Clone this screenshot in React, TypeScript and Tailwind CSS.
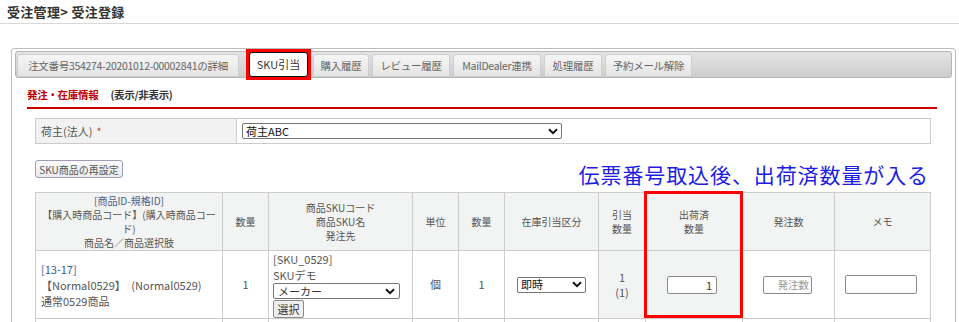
import React from "react";

const font = { fontFamily: '"Noto Sans CJK JP", "Noto Sans", sans-serif' };

function Tab({ label, w }: { label: string; w: string }) {
  return (
    <div
      className={`${w} h-[23px] flex items-center justify-center rounded-t-[3px] border border-[#cfcfcf] bg-gradient-to-b from-[#f6f6f6] to-[#e4e4e4] text-[10.5px] tracking-[-0.3px] text-[#666] mr-[3px] whitespace-nowrap`}
    >
      {label}
    </div>
  );
}

function Chevron() {
  return (
    <svg width="10" height="7" viewBox="0 0 10 7" className="shrink-0">
      <path d="M1 1.2 L5 5.2 L9 1.2" fill="none" stroke="#111" strokeWidth="2" />
    </svg>
  );
}

export default function App() {
  const th = "p-0 border border-[#cccccc] bg-[#f2f3f3] text-[10px] leading-[14px] text-[#555] font-normal text-center align-middle";
  const td = "p-0 border border-[#cccccc] text-[11px] text-[#555] align-middle";
  return (
    <div className="w-[959px] h-[322px] overflow-hidden bg-white relative" style={font}>
      <div className="h-[24px] border-b border-[#d8d8d8] pl-[7px] flex items-center">
        <span className="text-[13px] font-bold text-[#333] tracking-[0.3px]">受注管理&gt; 受注登録</span>
      </div>
      <div className="pt-[24px] pl-[11px] pr-[2px] flex">
        <div className="w-[945px] h-[300px] border border-[#bdbdbd] rounded-t-[3px] pt-[2px] px-[3px] mr-[1px]">
          {/* tab bar */}
          <div className="h-[27px] rounded-[3px] border border-[#b5b5b5] bg-gradient-to-b from-[#e4e4e4] to-[#cdcdcd] flex items-end pl-[1px]">
            <Tab label="注文番号354274-20201012-00002841の詳細" w="w-[222px]" />
            <div className="w-[65px] h-[31px] -mb-[3px] mr-[2px] ml-[4px] border-[3px] border-[#ff0000] bg-[#ff0000]">
              <div className="w-full h-full bg-white border-[1.5px] border-[#111] rounded-[3px] flex items-center justify-center text-[11px] text-[#333]">
                SKU引当
              </div>
            </div>
            <Tab label="購入履歴" w="w-[56px]" />
            <Tab label="レビュー履歴" w="w-[78px]" />
            <Tab label="MailDealer連携" w="w-[88px]" />
            <Tab label="処理履歴" w="w-[58px]" />
            <Tab label="予約メール解除" w="w-[87px]" />
          </div>
          <div className="px-[12px]">
            <div className="h-[29px] flex items-center text-[10.5px] font-bold pt-[4px] tracking-[-0.3px]">
              <span className="text-[#c00000]">発注・在庫情報</span>
              <span className="text-[#333] ml-[12px]">(表示/非表示)</span>
            </div>
            <div className="h-[2px] bg-[#cc0000] mr-[3px]"></div>
            <div className="pl-[8px] pr-[9px]">
              <div className="mt-[9px] h-[26px] border border-[#cccccc] flex">
                <div className="w-[201px] bg-[#f2f2f2] border-r border-[#cccccc] flex items-center pl-[5px] text-[11px] text-[#555]">
                  荷主(法人) <span className="text-[#e04040] ml-[4px]">*</span>
                </div>
                <div className="flex items-center pl-[5px]">
                  <div className="w-[320px] h-[16px] border border-[#767676] rounded-[2px] flex items-center justify-between px-[3px] text-[11px] text-[#111]">
                    <span>荷主ABC</span>
                    <Chevron />
                  </div>
                </div>
              </div>
              <div className="flex items-end justify-between mt-[16px] h-[29px]">
                <div className="mb-[11px] w-[88px] h-[18px] rounded-[3px] border border-[#9d9db8] bg-gradient-to-b from-[#fafafa] to-[#ebebeb] flex items-center justify-center text-[10px] text-[#555]">
                  SKU商品の再設定
                </div>
                <div className="text-[21px] leading-[24px] text-[#1c1ce6] mr-[2px] mb-[3px] tracking-[0.9px]">
                  伝票番号取込後、出荷済数量が入る
                </div>
              </div>
              <div className="relative mt-[3px]">
                <table className="table-fixed border-collapse w-[895px]">
                  <colgroup>
                    <col className="w-[187px]" />
                    <col className="w-[46px]" />
                    <col className="w-[144px]" />
                    <col className="w-[46px]" />
                    <col className="w-[46px]" />
                    <col className="w-[94px]" />
                    <col className="w-[47px]" />
                    <col className="w-[97px]" />
                    <col className="w-[92px]" />
                    <col className="w-[96px]" />
                  </colgroup>
                  <thead>
                    <tr className="h-[58px]">
                      <th className={th}>
                        <div className="text-[#4a5f8a]">[商品ID-規格ID]</div>
                        <div className="whitespace-nowrap">【購入時商品コード】(購入時商品コー</div>
                        <div>ド)</div>
                        <div>商品名／商品選択肢</div>
                      </th>
                      <th className={th}>数量</th>
                      <th className={th}>
                        <div>商品SKUコード</div>
                        <div>商品SKU名</div>
                        <div>発注先</div>
                      </th>
                      <th className={th}>単位</th>
                      <th className={th}>数量</th>
                      <th className={th}>在庫引当区分</th>
                      <th className={th}>
                        <div>引当</div>
                        <div>数量</div>
                      </th>
                      <th className={th}>
                        <div>出荷済</div>
                        <div>数量</div>
                      </th>
                      <th className={th}>発注数</th>
                      <th className={th}>メモ</th>
                    </tr>
                  </thead>
                  <tbody>
                    <tr className="h-[67px]">
                      <td className={`${td} pl-[5px] leading-[16px]`}>
                        <div className="text-[#3a5a9a]">[13-17]</div>
                        <div className="whitespace-nowrap">【Normal0529】　(Normal0529)</div>
                        <div>通常0529商品</div>
                      </td>
                      <td className={`${td} text-center`}>1</td>
                      <td className={`${td} pl-[4px] leading-[16px]`}>
                        <div>[SKU_0529]</div>
                        <div>SKUデモ</div>
                        <div className="w-[127px] h-[16px] border border-[#767676] rounded-[2px] flex items-center justify-between px-[4px] text-[#333]">
                          <span>メーカー</span>
                          <Chevron />
                        </div>
                        <div className="w-[31px] h-[18px] mt-[1px] border border-[#8a8a8a] rounded-[2px] bg-[#efefef] flex items-center justify-center text-[11px] text-[#333]">
                          選択
                        </div>
                      </td>
                      <td className={`${td} text-center`}>個</td>
                      <td className={`${td} text-center`}>1</td>
                      <td className={`${td} text-center`}>
                        <div className="ml-[12px] w-[69px] h-[16px] border border-[#767676] rounded-[2px] flex items-center justify-between px-[3px] text-[11px] text-[#111]">
                          <span>即時</span>
                          <Chevron />
                        </div>
                      </td>
                      <td className={`${td} text-center leading-[15px] bg-[#f2f3f3]`}>
                        <div>1</div>
                        <div>(1)</div>
                      </td>
                      <td className={`${td} bg-[#f2f3f3]`}>
                        <div className="ml-[21px] w-[50px] h-[18px] border border-[#8a8a8a] rounded-[2px] bg-white text-right pr-[4px] text-[11px] leading-[16px] text-[#333]">
                          1
                        </div>
                      </td>
                      <td className={td}>
                        <div className="ml-[20px] w-[49px] h-[18px] border border-[#8a8a8a] rounded-[2px] bg-white text-right pr-[2px] text-[10.5px] leading-[16px] text-[#999] whitespace-nowrap overflow-hidden">
                          発注数
                        </div>
                      </td>
                      <td className={td}>
                        <div className="ml-[10px] w-[72px] h-[19px] border border-[#8a8a8a] rounded-[2px] bg-white"></div>
                      </td>
                    </tr>
                    <tr className="h-[20px]">
                      <td className={td}></td>
                      <td className={td}></td>
                      <td className={td}></td>
                      <td className={td}></td>
                      <td className={td}></td>
                      <td className={td}></td>
                      <td className={td}></td>
                      <td className={td}></td>
                      <td className={td}></td>
                      <td className={td}></td>
                    </tr>
                  </tbody>
                </table>
                <div className="absolute left-[609px] top-[-1px] w-[99px] h-[127px] border-[3px] border-[#ff0000] pointer-events-none"></div>
              </div>
            </div>
          </div>
        </div>
        <div className="w-[1px] h-[300px] bg-[#b7c3cf]"></div>
      </div>
    </div>
  );
}
